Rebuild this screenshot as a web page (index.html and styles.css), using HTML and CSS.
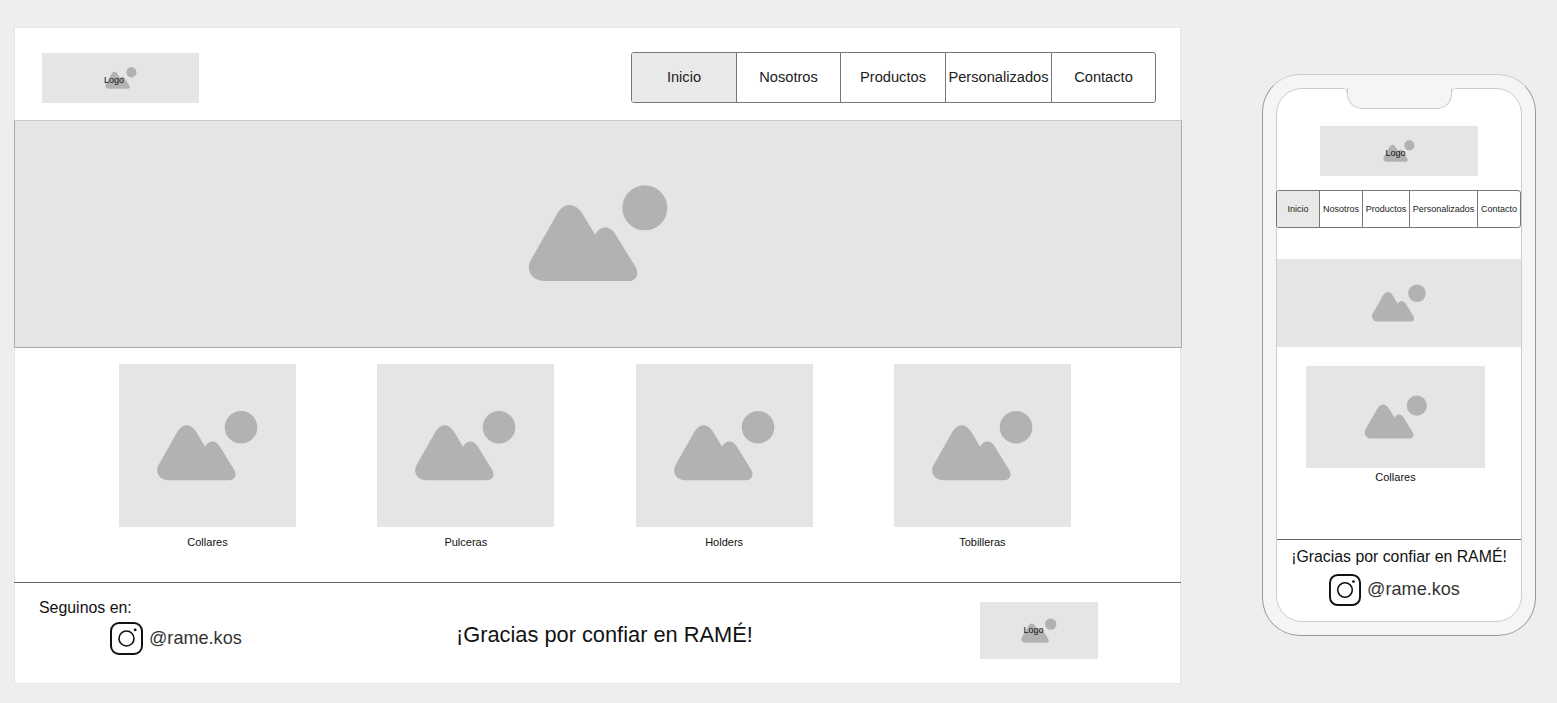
FILE: index.html
```html
<!DOCTYPE html>
<html lang="es">
<head>
    <meta charset="UTF-8">
    <title>RAMÉ</title>
    <link rel="stylesheet" href="styles.css">
</head>
<body>
    <svg class="defs" width="0" height="0">
        <symbol id="pic" viewBox="80 40 430 296">
            <circle cx="435" cy="112" r="68"></circle>
            <path d="M130 333H385C410 333 420 312 405 287L345 190C333 170 303 160 285 193L250 135C225 92 190 95 170 130L92 267C72 300 95 333 130 333Z"></path>
        </symbol>
        <symbol id="insta" viewBox="0 0 33 33">
            <rect x="1" y="1" width="31" height="31" rx="8" fill="none" stroke="#111" stroke-width="2"></rect>
            <circle cx="16.5" cy="16.5" r="7.5" fill="none" stroke="#111" stroke-width="1.6"></circle>
            <circle cx="25.2" cy="7.8" r="1.4" fill="#111"></circle>
        </symbol>
    </svg>

    <div class="desktop">
        <div class="header">
            <div class="logo">
                <svg class="pic pic-logo"><use href="#pic"></use></svg>
                <span class="logo-text">Logo</span>
            </div>
            <ul class="nav">
                <li class="active">Inicio</li>
                <li>Nosotros</li>
                <li>Productos</li>
                <li>Personalizados</li>
                <li>Contacto</li>
            </ul>
        </div>

        <div class="hero">
            <svg class="pic pic-hero"><use href="#pic"></use></svg>
        </div>

        <div class="cards">
            <div class="card">
                <div class="card-img"><svg class="pic pic-card"><use href="#pic"></use></svg></div>
                <p>Collares</p>
            </div>
            <div class="card">
                <div class="card-img"><svg class="pic pic-card"><use href="#pic"></use></svg></div>
                <p>Pulceras</p>
            </div>
            <div class="card">
                <div class="card-img"><svg class="pic pic-card"><use href="#pic"></use></svg></div>
                <p>Holders</p>
            </div>
            <div class="card">
                <div class="card-img"><svg class="pic pic-card"><use href="#pic"></use></svg></div>
                <p>Tobilleras</p>
            </div>
        </div>

        <div class="footer">
            <div class="follow">
                <p>Seguinos en:</p>
                <div class="social">
                    <svg class="insta"><use href="#insta"></use></svg>
                    <span>@rame.kos</span>
                </div>
            </div>
            <p class="thanks">¡Gracias por confiar en RAMÉ!</p>
            <div class="logo logo-footer">
                <svg class="pic pic-footer"><use href="#pic"></use></svg>
                <span class="logo-text">Logo</span>
            </div>
        </div>
    </div>

    <div class="phone">
        <div class="screen">
            <div class="notch"></div>
            <div class="logo logo-phone">
                <svg class="pic pic-logo"><use href="#pic"></use></svg>
                <span class="logo-text">Logo</span>
            </div>
            <ul class="nav nav-phone">
                <li class="active">Inicio</li>
                <li>Nosotros</li>
                <li>Productos</li>
                <li>Personalizados</li>
                <li>Contacto</li>
            </ul>
            <div class="phone-hero">
                <svg class="pic pic-phone-hero"><use href="#pic"></use></svg>
            </div>
            <div class="phone-card">
                <div class="card-img"><svg class="pic pic-phone"><use href="#pic"></use></svg></div>
                <p>Collares</p>
            </div>
            <div class="phone-footer">
                <p>¡Gracias por confiar en RAMÉ!</p>
                <div class="social">
                    <svg class="insta"><use href="#insta"></use></svg>
                    <span>@rame.kos</span>
                </div>
            </div>
        </div>
    </div>
</body>
</html>
```

FILE: styles.css
```css
* {
    box-sizing: border-box;
}

html, body {
    height: 703px;
    overflow: hidden;
}

body {
    margin: 0;
    display: flex;
    align-items: flex-start;
    background-color: #eee;
    font-family: "Liberation Sans", Arial, sans-serif;
    color: #111;
}

p {
    margin: 0;
}

.defs {
    position: absolute;
}

.pic {
    display: block;
    fill: #b2b2b2;
}

.pic-hero {
    width: 143px;
    height: 98px;
}

.pic-card {
    width: 103px;
    height: 71px;
}

.pic-phone {
    width: 64px;
    height: 44px;
}

.pic-phone-hero {
    width: 56px;
    height: 38px;
}

.pic-logo {
    width: 32px;
    height: 22px;
}

.pic-footer {
    width: 36px;
    height: 25px;
}

/* desktop frame */
.desktop {
    flex: none;
    width: 1167px;
    height: 657px;
    margin: 27px 0 0 14px;
    background-color: #fff;
    border: 1px solid #e6e6e6;
    display: flex;
    flex-direction: column;
}

.header {
    height: 92px;
    padding: 7px 24px 0 27px;
    display: flex;
    justify-content: space-between;
    align-items: center;
    flex: none;
}

.logo {
    position: relative;
    width: 157px;
    height: 50px;
    background-color: #e5e5e5;
    display: flex;
    justify-content: center;
    align-items: center;
}

.logo-text {
    position: absolute;
    left: 50%;
    top: 50%;
    transform: translate(-16.5px, -3px);
    font-size: 9px;
    line-height: 11px;
}

.nav {
    list-style: none;
    margin: 0;
    padding: 0;
    width: 525px;
    height: 51px;
    display: grid;
    grid-template-columns: 104px 104px 105px 106px 1fr;
    border: 1px solid #777;
    border-radius: 3px;
    overflow: hidden;
    font-size: 14.67px;
    color: #222;
    flex: none;
}

.nav li {
    display: flex;
    justify-content: center;
    align-items: center;
    padding-bottom: 2px;
    border-left: 1px solid #777;
    white-space: nowrap;
}

.nav li:first-child {
    border-left: 0;
}

.nav li.active {
    background-color: #e9e9e9;
}

.hero {
    flex: none;
    width: 1168px;
    height: 228px;
    margin-left: -1px;
    background-color: #e5e5e5;
    border: 1px solid #aaa;
    border-top-color: #c8c8c8;
    display: flex;
    justify-content: center;
    align-items: center;
    padding-bottom: 2px;
}

.cards {
    flex: none;
    height: 234px;
    padding: 16px 0 0 104px;
    display: flex;
    gap: 81.3px;
}

.card {
    width: 177px;
    text-align: center;
    font-size: 11px;
}

.card p {
    margin-top: 9px;
    line-height: 13px;
}

.card-img {
    height: 163px;
    background-color: #e5e5e5;
    display: flex;
    justify-content: center;
    align-items: center;
}

.footer {
    flex: 1;
    margin-left: -1px;
    margin-right: -1px;
    border-top: 1px solid #666;
    display: flex;
    align-items: flex-start;
}

.follow {
    width: 442px;
    padding: 16px 0 0 25px;
    font-size: 15.9px;
    line-height: 18px;
    flex: none;
}

.follow .social {
    margin: 5px 0 0 71px;
}

.social {
    display: flex;
    align-items: center;
    gap: 6px;
    font-size: 18.1px;
    color: #333;
}

.social span {
    margin-top: -2px;
}

.insta {
    flex: none;
    width: 33px;
    height: 33px;
}

.thanks {
    width: 524px;
    padding-top: 39px;
    font-size: 21.8px;
    line-height: 25px;
    flex: none;
}

.logo-footer {
    width: 118px;
    height: 57px;
    margin-top: 19px;
    flex: none;
}

.logo-footer .logo-text {
    transform: translate(-15.5px, -6px);
}

/* phone frame */
.phone {
    flex: none;
    width: 274px;
    height: 562px;
    margin: 74px 0 0 81px;
    padding: 13px;
    background-color: #f5f5f5;
    border: 1px solid #999;
    border-top-color: #ccc;
    border-radius: 38px;
}

.screen {
    position: relative;
    height: 100%;
    padding-top: 37px;
    background-color: #fff;
    border: 1px solid #ccc;
    border-radius: 26px;
    display: flex;
    flex-direction: column;
}

.notch {
    position: absolute;
    top: -1px;
    left: 70px;
    width: 105px;
    height: 21px;
    background-color: #f5f5f5;
    border: 1px solid #ccc;
    border-top: 0;
    border-radius: 0 0 15px 15px;
}

.notch::before,
.notch::after {
    content: "";
    position: absolute;
    top: 0;
    width: 4px;
    height: 4px;
}

.notch::before {
    left: -5px;
    background: radial-gradient(circle at 0 100%, #fff 3px, #ccc 3.5px, #f5f5f5 4px);
}

.notch::after {
    right: -5px;
    background: radial-gradient(circle at 100% 100%, #fff 3px, #ccc 3.5px, #f5f5f5 4px);
}

.logo-phone {
    width: 158px;
    flex: none;
    margin: 0 0 14px 43px;
}

.logo-phone .logo-text {
    transform: translate(-13.5px, -3px);
}

.nav-phone {
    width: 245px;
    height: 38px;
    margin-left: -1px;
    grid-template-columns: 42px 43px 47px 68px 1fr;
    font-size: 9px;
}

.nav-phone li {
    padding-bottom: 0;
}

.phone-hero {
    flex: none;
    height: 88px;
    margin-top: 31px;
    background-color: #e5e5e5;
    display: flex;
    justify-content: center;
    align-items: center;
}

.phone-card {
    flex: none;
    width: 179px;
    margin: 19px 0 0 29px;
    text-align: center;
    font-size: 11px;
}

.phone-card .card-img {
    height: 102px;
}

.phone-card p {
    margin-top: 3px;
    line-height: 13px;
}

.phone-footer {
    margin-top: auto;
    height: 82px;
    border-top: 1px solid #666;
    display: flex;
    flex-direction: column;
    align-items: center;
    padding-top: 8px;
    font-size: 15.85px;
    line-height: 18px;
}

.phone-footer .social {
    margin: 8px 0 0 -9px;
}

.phone-footer .insta {
    width: 32px;
    height: 32px;
}
```
